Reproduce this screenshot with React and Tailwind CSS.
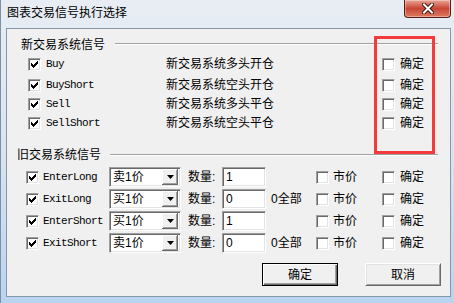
import React from "react";

const CHECK_PATH =
  "M6 0h1v1h-1z M5 1h2v1h-2z M0 2h1v1h-1z M4 2h3v1h-3z M0 3h2v1h-2z M3 3h3v1h-3z M0 4h5v1h-5z M1 5h3v1h-3z M2 6h1v1h-1z";

function Check({ checked }) {
  return (
    <span className="flex h-[13px] w-[13px] shrink-0 items-center justify-center border border-t-[#a0a0a0] border-l-[#a0a0a0] border-r-white border-b-white bg-white shadow-[inset_1px_1px_0_#696969,inset_-1px_-1px_0_#e3e3e3]">
      {checked && (
        <svg width="7" height="7" viewBox="0 0 7 7">
          <path d={CHECK_PATH} fill="#000" />
        </svg>
      )}
    </span>
  );
}

function Combo({ value }) {
  return (
    <div className="flex h-[20px] w-[72px] shrink-0 items-center border border-t-[#a0a0a0] border-l-[#a0a0a0] border-r-white border-b-white bg-white pl-[3px] pr-[2px] shadow-[inset_1px_1px_0_#696969,inset_-1px_-1px_0_#e3e3e3]">
      <span className="flex-1">{value}</span>
      <span className="flex h-[16px] w-[16px] items-center justify-center bg-[#f0f0f0] shadow-[inset_-1px_-1px_0_#696969,inset_1px_1px_0_#ffffff,inset_-2px_-2px_0_#a0a0a0]">
        <svg width="7" height="4" viewBox="0 0 7 4">
          <path d="M0 0h7l-3.5 4z" fill="#000" />
        </svg>
      </span>
    </div>
  );
}

function Field({ value }) {
  return (
    <div className="flex h-[20px] w-[44px] shrink-0 items-center border border-t-[#a0a0a0] border-l-[#a0a0a0] border-r-white border-b-white bg-white pl-[3px] shadow-[inset_1px_1px_0_#696969,inset_-1px_-1px_0_#e3e3e3]">
      {value}
    </div>
  );
}

const newSignals = [
  { name: "Buy", desc: "新交易系统多头开仓", mt: "mt-[4px]" },
  { name: "BuyShort", desc: "新交易系统空头开仓", mt: "mt-[5px]" },
  { name: "Sell", desc: "新交易系统多头平仓", mt: "mt-[3px]" },
  { name: "SellShort", desc: "新交易系统空头平仓", mt: "mt-[3px]" },
];

const oldSignals = [
  { name: "EnterLong", price: "卖1价", qty: "1", all: false },
  { name: "ExitLong", price: "买1价", qty: "0", all: true },
  { name: "EnterShort", price: "买1价", qty: "1", all: false },
  { name: "ExitShort", price: "卖1价", qty: "0", all: true },
];

export default function App() {
  return (
    <div className="relative flex h-[303px] w-[454px] flex-col overflow-hidden border-l border-[#7d90a6] bg-gradient-to-b from-[#e8edf3] via-[#d9e4f0] to-[#b9d4f0] font-['Liberation_Sans','Noto_Sans_CJK_SC',sans-serif] text-[12px] leading-[14px] text-black">
      {/* Title bar */}
      <div className="flex h-[28px] shrink-0 items-start justify-between">
        <div className="pl-[6px] pt-[6px]">图表交易信号执行选择</div>
        <div className="mr-[3px] flex h-[18px] w-[47px] items-center justify-center rounded-b-[4px] border border-t-0 border-[#5a1c16] bg-gradient-to-b from-[#e9a395] via-[#c74535] to-[#dc7a5f] shadow-[inset_0_0_0_1px_rgba(255,255,255,0.35)]">
          <svg width="12" height="11" viewBox="0 0 12 11">
            <path d="M2 1.5L10 9.5M10 1.5L2 9.5" stroke="#3b1510" strokeWidth="4" strokeLinecap="square" />
            <path d="M2 1.5L10 9.5M10 1.5L2 9.5" stroke="#ffffff" strokeWidth="2" strokeLinecap="square" />
          </svg>
        </div>
      </div>

      {/* Client area */}
      <div className="ml-[5px] flex h-[269px] w-[445px] flex-col border border-[#8796a8] bg-[#f0f0f0]">
        {/* New signals group */}
        <div className="mt-[9px] flex items-start pl-[14px] pr-[12px]">
          <span>新交易系统信号</span>
          <div className="ml-[10px] mt-[5px] flex-1 border-t border-b border-t-[#a0a0a0] border-b-white" />
        </div>
        {newSignals.map((s) => (
          <div key={s.name} className={`flex h-[16px] items-center pl-[21px] ${s.mt}`}>
            <Check checked />
            <span className="ml-[5px] w-[120px] font-['Liberation_Mono',monospace] text-[11px] tracking-[-0.6px]">
              {s.name}
            </span>
            <span className="w-[216px]">{s.desc}</span>
            <Check />
            <span className="ml-[5px]">确定</span>
          </div>
        ))}

        {/* Old signals group */}
        <div className="mt-[17px] flex items-start pl-[10px] pr-[12px]">
          <span>旧交易系统信号</span>
          <div className="ml-[9px] mt-[6px] flex-1 border-t border-b border-t-[#a0a0a0] border-b-white" />
        </div>
        <div className="mt-[4px] flex flex-col">
          {oldSignals.map((s) => (
            <div key={s.name} className="flex h-[22px] items-center pl-[19px]">
              <Check checked />
              <span className="ml-[4px] w-[66px] font-['Liberation_Mono',monospace] text-[11px] tracking-[-0.6px]">
                {s.name}
              </span>
              <Combo value={s.price} />
              <span className="ml-[7px] w-[34px]">数量:</span>
              <Field value={s.qty} />
              <span className="ml-[5px] w-[45px]">{s.all ? "0全部" : ""}</span>
              <Check />
              <span className="ml-[4px] w-[49px]">市价</span>
              <Check />
              <span className="ml-[5px]">确定</span>
            </div>
          ))}
        </div>

        {/* Buttons */}
        <div className="mt-[9px] flex justify-end gap-[27px] pr-[9px]">
          <button className="flex h-[23px] w-[76px] items-center justify-center border border-black bg-[#f0f0f0] shadow-[inset_1px_1px_0_#ffffff,inset_-1px_-1px_0_#696969,inset_-2px_-2px_0_#a0a0a0]">
            确定
          </button>
          <button className="flex h-[23px] w-[76px] items-center justify-center border border-t-white border-l-white border-r-[#696969] border-b-[#696969] bg-[#f0f0f0] shadow-[inset_1px_1px_0_#e3e3e3,inset_-1px_-1px_0_#a0a0a0]">
            取消
          </button>
        </div>
      </div>

      {/* Annotation rectangle drawn over the dialog */}
      <div className="absolute left-[373px] top-[36px] h-[118px] w-[61px] border-[3px] border-[#f43a3a]" />
    </div>
  );
}
